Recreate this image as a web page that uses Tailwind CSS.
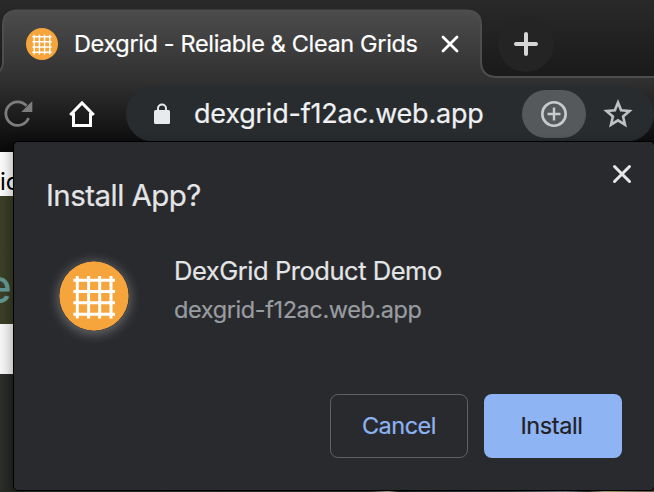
<!DOCTYPE html>
<html lang="en">
<head>
<meta charset="utf-8">
<title>Dexgrid - Reliable &amp; Clean Grids</title>
<script src="https://cdn.jsdelivr.net/npm/@tailwindcss/browser@4"></script>
</head>
<body class="relative h-[492px] w-[654px] overflow-hidden bg-[#252825] font-['Inter',sans-serif]">
<header class="relative h-[152px] bg-[#1c1c1c]">
  <svg class="absolute inset-0" width="654" height="152" viewBox="0 0 654 152">
    <defs>
      <linearGradient id="frame" x1="0" y1="0" x2="0" y2="76" gradientUnits="userSpaceOnUse"><stop offset="0" stop-color="#292929"/><stop offset="1" stop-color="#1a1a1a"/></linearGradient>
      <linearGradient id="bar" x1="0" y1="10" x2="0" y2="152" gradientUnits="userSpaceOnUse"><stop offset="0" stop-color="#4c4c4c"/><stop offset=".5" stop-color="#303030"/><stop offset=".9" stop-color="#101010"/><stop offset="1" stop-color="#090909"/></linearGradient>
    </defs>
    <path d="M0 0H654V152H0Z" fill="url(#frame)"/>
    <path d="M0 71Q3 67 3 62V25Q3 10 18 10H466Q481 10 481 25V61Q481 77 497 77H654V152H0Z" fill="url(#bar)"/>
    <path d="M0 71Q3 67 3 62V25Q3 10.5 18 10.5H466Q481 10.5 481 25V61Q481 77 497 77H654" fill="none" stroke="#4e4e4e" stroke-width="2"/>
  </svg>
  <div class="relative flex h-[88px] items-center pl-[26px]">
    <svg class="size-8 shrink-0" viewBox="0 0 70 70"><circle cx="35" cy="35" r="35" fill="#f5a53c"/><path d="M18 15V58M29.3 15V58M40.6 15V58M52 15V58M14 19H56M14 30.3H56M14 41.6H56M14 53H56" stroke="#fff" stroke-width="3.2"/></svg>
    <span class="ml-[16px] w-[366.500px] text-[23.5px] tracking-[-0.36px] whitespace-nowrap text-white [-webkit-text-stroke:0.2px_white]">Dexgrid - Reliable &amp; Clean Grids</span>
    <svg class="size-[18px] shrink-0" viewBox="0 0 18 18"><path d="M2 2L16 16M16 2L2 16" stroke="#fff" stroke-width="2.8" stroke-linecap="round"/></svg>
    <div class="ml-[39px] flex size-14 items-center justify-center rounded-full bg-[#242424]"><svg class="size-6" viewBox="0 0 24 24"><path d="M12 2V22M2 12H22" stroke="#d5d5d5" stroke-width="4" stroke-linecap="round"/></svg></div>
  </div>
  <div class="relative -mt-0.5 flex h-14 items-center">
    <svg class="ml-[3px] h-8 w-[30px] shrink-0" viewBox="0 0 30 32"><path d="M25.600 20A11.800 11.800 0 1 1 23.500 7.800" fill="none" stroke="#7d7d7d" stroke-width="2.800"/><path d="M29.300 3V14H18.300Z" fill="#7d7d7d"/></svg>
    <svg class="ml-[35px] h-8 w-[28px] shrink-0" viewBox="0 0 28 32"><path d="M2.200 17L14 5L25.800 17M5.500 15V27.500H22.500V15" fill="none" stroke="#fff" stroke-width="3"/></svg>
    <div class="ml-[30px] flex h-14 w-[528px] shrink-0 items-center rounded-full bg-[#282c2f]">
      <svg class="ml-7 h-6 w-4 shrink-0" viewBox="0 0 16 24"><rect y="8" width="16" height="14" rx="1.500" fill="#e8eaed"/><path d="M4 9V6.500a4 4 0 0 1 8 0V9" fill="none" stroke="#e8eaed" stroke-width="2"/></svg>
      <span class="ml-[24px] w-[328px] text-[27px] tracking-[-0.22px] whitespace-nowrap text-[#eff0f2] [-webkit-text-stroke:0.2px_#eff0f2]">dexgrid-f12ac.web.app</span>
      <div class="flex h-12 w-16 shrink-0 items-center justify-center rounded-full bg-[#55595c]"><svg class="size-[26px]" viewBox="0 0 26 26"><path d="M13 6.500V19.500M6.500 13H19.500" stroke="#c8cacc" stroke-width="2.400"/><circle cx="13" cy="13" r="11.700" fill="none" stroke="#c8cacc" stroke-width="2.600"/></svg></div>
      <svg class="ml-[17px] h-8 w-[30px] shrink-0" viewBox="0 0 30 32"><path d="M15 4.500L18.100 12.300L26.500 13L20.100 18.500L22 26.700L15 22.300L8 26.700L9.900 18.500L3.500 13L11.900 12.300Z" fill="none" stroke="#bfc2c5" stroke-width="2.600"/></svg>
    </div>
  </div>
</header>
<main class="w-[14px] overflow-hidden">
  <div class="h-11 bg-gradient-to-r from-[#fafafa] to-[#dedede] pt-[16px]"><span class="text-[24px] leading-7 text-black">ic</span></div>
  <div class="h-32 bg-gradient-to-r from-[#3c3f25] to-[#303420] pt-[65px]"><span class="-ml-[16px] text-[48px] leading-[50px] text-[#5d928f]">e</span></div>
  <div class="h-[50px] bg-gradient-to-r from-[#f5f5f5] to-[#d8d8d8]"></div>
  <div class="h-[118px] bg-gradient-to-r from-[#2b2e2a] to-[#1e211e]"></div>
</main>
<div class="absolute bottom-0 left-0 h-px w-full bg-[linear-gradient(90deg,#252823_0px,#30302b_370px,#b5a890_388px,#202420_398px,#343f45_510px,#777786_565px,#302d27_588px,#b5a878_605px,#5f5840_654px)]"></div>
<section class="absolute top-[141px] left-[13px] h-[350px] w-[642px] rounded-[5px] border border-black bg-[#292a2d] shadow-[0_0_8px_rgba(0,0,0,0.2)]">
  <div class="flex h-[88px] justify-between pr-[22px] pl-[32px]">
    <h1 class="pt-[33px] text-[29.5px] leading-10 tracking-[-0.55px] text-[#e4e5e6] [-webkit-text-stroke:0.2px_#e4e5e6]">Install App?</h1>
    <svg class="mt-[22px] size-5" viewBox="0 0 20 20"><path d="M2.500 2.500L17.500 17.500M17.500 2.500L2.500 17.500" stroke="#e6e8e8" stroke-width="3" stroke-linecap="round"/></svg>
  </div>
  <div class="flex h-[164px] pl-[45px]">
    <svg class="mt-[31px] size-[70px] shrink-0 rounded-full shadow-[0_2px_12px_1px_rgba(255,255,255,0.32)]" viewBox="0 0 70 70"><circle cx="35" cy="35" r="34.700" fill="#f5a53c"/><path d="M18.300 15V57.500M29.600 15V57.500M40.700 15V57.500M52 15V57.500M14.300 19.200H56M14.300 30.500H56M14.300 41.800H56M14.300 53.200H56" stroke="#fff" stroke-width="3"/></svg>
    <div class="ml-[45px] pt-[24px]">
      <p class="text-[25.5px] leading-[34px] tracking-[-0.46px] whitespace-nowrap text-[#e4e5e6] [-webkit-text-stroke:0.2px_#e4e5e6]">DexGrid Product Demo</p>
      <p class="pt-[5px] text-[23.5px] leading-[34px] tracking-[-0.4px] whitespace-nowrap text-[#999da1] [-webkit-text-stroke:0.2px_#999da1]">dexgrid-f12ac.web.app</p>
    </div>
  </div>
  <div class="flex justify-end gap-4 pr-[32px]">
    <button class="h-16 w-[138px] rounded-lg border border-[#5f6165] text-[23.5px] tracking-[-0.5px] text-[#8db3f2] [-webkit-text-stroke:0.2px_#8db3f2]">Cancel</button>
    <button class="h-16 w-[138px] rounded-lg bg-[#8fb4f3] pr-[3px] text-[23.5px] tracking-[-0.4px] text-[#202124] [-webkit-text-stroke:0.2px_#202124]">Install</button>
  </div>
</section>
</body>
</html>
